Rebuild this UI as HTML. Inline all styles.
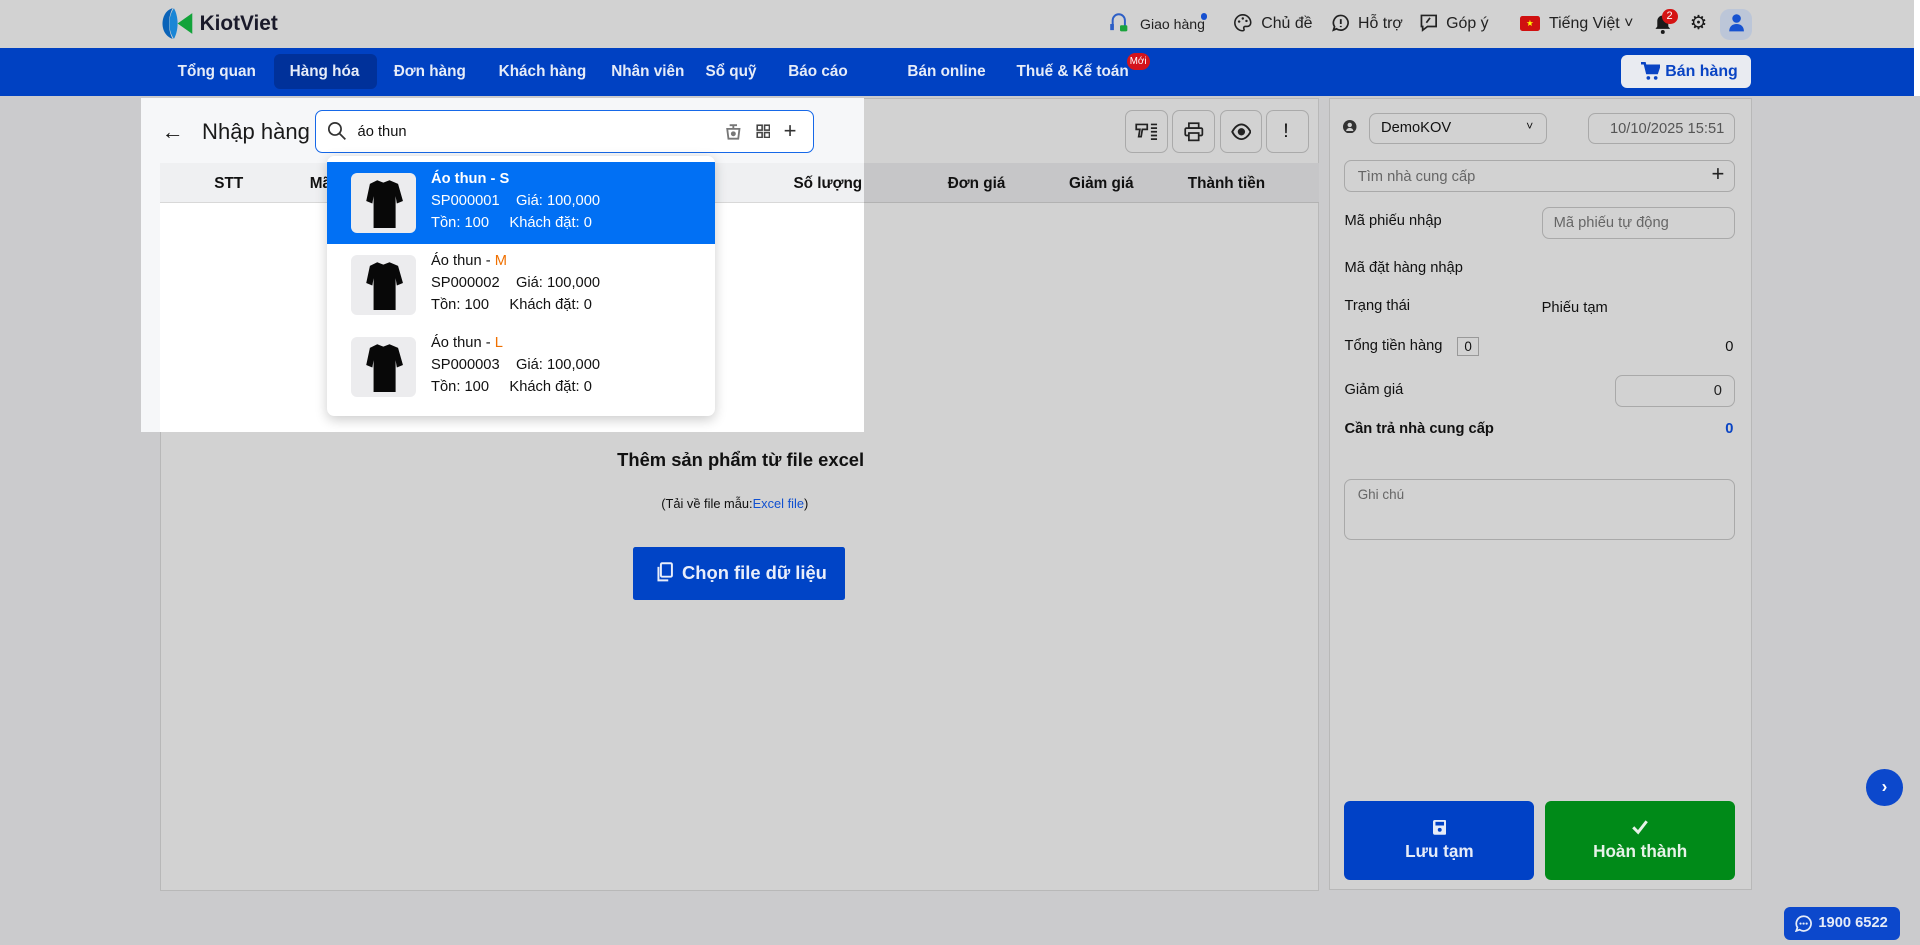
<!DOCTYPE html>
<html><head><meta charset="utf-8">
<style>
html{zoom:1.22449}
*{box-sizing:border-box;margin:0;padding:0}
body{width:1568px;height:772px;overflow:hidden;background:#cbcbcd;font-family:"Liberation Sans",sans-serif;color:#111;position:relative;font-size:13px}
.a{position:absolute}
.top{left:0;top:0;width:1568px;height:39px;background:#d2d2d2}
.nav{left:0;top:39px;width:1563px;height:39px;background:#0041c2}
.nav span{position:absolute;top:0;line-height:39px;color:#e6ecf8;font-size:12.5px;font-weight:bold;transform:translateX(-50%)}
.tb{font-size:13px;color:#222}
.panel{background:#d2d2d2;border:1px solid #b8b8b8}
.inp{border:1px solid #a9a9a9;border-radius:6px;background:#d2d2d2;color:#666}
.ico{border:1px solid #aaa;border-radius:6px;width:35px;height:35px;background:#d2d2d2}
.item{left:0;width:317px;height:67px}
.thumb{position:absolute;left:20px;top:9px;width:53px;height:49px;border-radius:5px;background:#ececee}
.thumb svg{position:absolute;left:11px;top:5px}
.itx{position:absolute;left:85px;font-size:12px;line-height:18px;top:6px}
</style></head><body>
<div class="a top"></div>
<!-- logo -->
<svg class="a" style="left:129px;top:6px" width="32" height="27" viewBox="0 0 32 27"><path d="M12 1 C2 3 0 22 12 26 C8 19 8 8 12 1Z" fill="#0a63b8"/><path d="M13 1 C8 8 8 19 13 26 C17 19 17 8 13 1Z" fill="#1a86d6"/><path d="M28 5 L16 13.5 L28 22 Z" fill="#12a33a"/></svg>
<div class="a" style="left:163px;top:10px;font-size:17px;font-weight:bold;color:#1a1a2a">KiotViet</div>
<!-- top right -->
<svg class="a" style="left:906px;top:11px" width="16" height="16" viewBox="0 0 16 16"><path d="M3 12V6a5 5 0 0 1 10 0v6" fill="none" stroke="#2d5fc6" stroke-width="1.6"/><rect x="1" y="9" width="3" height="5" fill="#2d5fc6"/><rect x="9" y="10" width="6" height="5" rx="1" fill="#1aa33c"/></svg>
<div class="a tb" style="left:931px;top:13px;font-size:11.5px">Giao hàng</div>
<div class="a" style="left:981px;top:11px;width:5px;height:5px;border-radius:50%;background:#1650d0"></div>
<svg class="a" style="left:1007px;top:11px" width="16" height="16" viewBox="0 0 16 16"><path d="M8 1.5a6.5 6.5 0 1 0 0 13c1 0 1.3-.8.9-1.6-.5-.9.1-1.9 1.1-1.9h1.5A3 3 0 0 0 14.5 8 6.5 6.5 0 0 0 8 1.5z" fill="none" stroke="#222" stroke-width="1.3"/><circle cx="5" cy="7" r="1" fill="#222"/><circle cx="8" cy="4.5" r="1" fill="#222"/><circle cx="11" cy="6.5" r="1" fill="#222"/></svg>
<div class="a tb" style="left:1030px;top:12px">Chủ đề</div>
<svg class="a" style="left:1087px;top:11px" width="16" height="16" viewBox="0 0 16 16"><path d="M8 2a6 6 0 1 1-3.5 10.9L2 14l.9-2.8A6 6 0 0 1 8 2z" fill="none" stroke="#222" stroke-width="1.4"/><path d="M8 5v4M8 10.5v1" stroke="#222" stroke-width="1.5"/></svg>
<div class="a tb" style="left:1109px;top:12px">Hỗ trợ</div>
<svg class="a" style="left:1159px;top:11px" width="16" height="16" viewBox="0 0 16 16"><path d="M2 2h12v9H7l-4 3v-3H2z" fill="none" stroke="#222" stroke-width="1.4"/><path d="M9 4l-3 4" stroke="#222" stroke-width="1.4"/></svg>
<div class="a tb" style="left:1181px;top:12px">Góp ý</div>
<div class="a" style="left:1241px;top:13px;width:17px;height:12px;background:#d01010;border-radius:2px;color:#ff0;font-size:7px;text-align:center;line-height:12px">★</div>
<div class="a tb" style="left:1265px;top:12px">Tiếng Việt ˅</div>
<svg class="a" style="left:1350px;top:11px" width="16" height="18" viewBox="0 0 16 18"><path d="M8 2a4.5 4.5 0 0 0-4.5 4.5V11L2 13h12l-1.5-2V6.5A4.5 4.5 0 0 0 8 2z" fill="#1a1a1a"/><circle cx="8" cy="15.5" r="1.6" fill="#1a1a1a"/></svg>
<div class="a" style="left:1357px;top:7px;width:13px;height:13px;border-radius:50%;background:#d41414;color:#fff;font-size:9px;text-align:center;line-height:13px">2</div>
<div class="a" style="left:1380px;top:9px;font-size:16px;color:#1a1a1a">⚙</div>
<div class="a" style="left:1405px;top:7px;width:26px;height:26px;border-radius:8px;background:#bcc6d8"></div>
<svg class="a" style="left:1411px;top:11px" width="14" height="16" viewBox="0 0 14 16"><circle cx="7" cy="4.5" r="3.5" fill="#1652d0"/><path d="M1 15c0-4 2.5-6 6-6s6 2 6 6z" fill="#1652d0"/></svg>

<div class="a nav">
<div class="a" style="left:224px;top:5px;width:84px;height:29px;border-radius:5px;background:#00319a"></div>
<span style="left:177px">Tổng quan</span><span style="left:265px">Hàng hóa</span><span style="left:351px">Đơn hàng</span><span style="left:443px">Khách hàng</span><span style="left:529px">Nhân viên</span><span style="left:597px">Sổ quỹ</span><span style="left:668px">Báo cáo</span><span style="left:773px">Bán online</span><span style="left:876px">Thuế &amp; Kế toán</span>
<div class="a" style="left:920px;top:4px;width:19px;height:14px;border-radius:7px;background:#d4141c;color:#fff;font-size:8px;text-align:center;line-height:14px">Mới</div>
<div class="a" style="left:1324px;top:6px;width:106px;height:27px;border-radius:5px;background:#e9ebf1;color:#0a44c4;font-weight:bold;font-size:13px;line-height:27px;padding-left:36px">Bán hàng</div>
<svg class="a" style="left:1340px;top:12px" width="16" height="15" viewBox="0 0 16 15"><path d="M0 1h3l2 8h8l2-6H4" fill="none" stroke="#0a44c4" stroke-width="2"/><circle cx="6" cy="13" r="1.5" fill="#0a44c4"/><circle cx="12" cy="13" r="1.5" fill="#0a44c4"/><path d="M4 3h11l-2 6H5z" fill="#0a44c4"/></svg>
</div>
<div class="a" style="left:1563px;top:0;width:5px;height:78px;background:#fff"></div>

<!-- left panel -->
<div class="a panel" style="left:131px;top:80px;width:946px;height:648px"></div>
<div class="a" style="left:131px;top:133px;width:946px;height:33px;background:#c6c6c8;border-bottom:1px solid #b2b2b2"></div>
<div class="a" style="left:774px;top:143px;font-weight:bold;font-size:12.5px">Đơn giá</div>
<div class="a" style="left:873px;top:143px;font-weight:bold;font-size:12.5px">Giảm giá</div>
<div class="a" style="left:970px;top:143px;font-weight:bold;font-size:12.5px">Thành tiền</div>
<div class="a ico" style="left:919px;top:90px"></div><div class="a ico" style="left:957px;top:90px"></div><div class="a ico" style="left:996px;top:90px"></div><div class="a ico" style="left:1034px;top:90px"></div>
<svg class="a" style="left:927px;top:100px" width="20" height="16" viewBox="0 0 20 16"><path d="M1 2h9v4H6l-1 6H3l1-6H1z" fill="none" stroke="#222" stroke-width="1.4"/><path d="M13 2h5M13 5h5M13 8h5M13 11h5M13 14h5" stroke="#222" stroke-width="1.4"/></svg>
<svg class="a" style="left:967px;top:100px" width="16" height="16" viewBox="0 0 16 16"><rect x="4" y="1" width="8" height="4" fill="none" stroke="#222" stroke-width="1.4"/><rect x="1" y="5" width="14" height="6" rx="1" fill="none" stroke="#222" stroke-width="1.4"/><rect x="4" y="9" width="8" height="6" fill="#d2d2d2" stroke="#222" stroke-width="1.4"/></svg>
<svg class="a" style="left:1005px;top:100px" width="17" height="16" viewBox="0 0 17 16"><path d="M1 8c2-4 5-6 7.5-6s5.5 2 7.5 6c-2 4-5 6-7.5 6S3 12 1 8z" fill="none" stroke="#222" stroke-width="1.5"/><circle cx="8.5" cy="8" r="3" fill="#222"/></svg>
<div class="a" style="left:1048px;top:98px;font-size:16px">!</div>
<div class="a" style="left:504px;top:367px;font-weight:bold;font-size:15px">Thêm sản phẩm từ file excel</div>
<div class="a" style="left:540px;top:405px;font-size:10.5px">(Tải về file mẫu:<span style="color:#1050d0">Excel file</span>)</div>
<div class="a" style="left:517px;top:447px;width:173px;height:43px;background:#0044c6;border-radius:2px;color:#e9eefa;font-weight:bold;font-size:15px;line-height:43px;padding-left:40px">Chọn file dữ liệu</div>
<svg class="a" style="left:536px;top:459px" width="14" height="17" viewBox="0 0 14 17"><rect x="4" y="1" width="9" height="11" rx="1" fill="none" stroke="#e9eefa" stroke-width="1.6"/><path d="M2 4v11h8" fill="none" stroke="#e9eefa" stroke-width="1.6"/></svg>

<!-- spotlight region -->
<div class="a" style="left:115px;top:80px;width:591px;height:273px;background:#f6f7f9"></div>
<div class="a" style="left:131px;top:133px;width:575px;height:33px;background:#eff0f2;border-bottom:1px solid #d8d8d8"></div>
<div class="a" style="left:131px;top:166px;width:575px;height:187px;background:#fff"></div>
<div class="a" style="left:175px;top:143px;font-weight:bold;font-size:12.5px">STT</div>
<div class="a" style="left:253px;top:143px;font-weight:bold;font-size:12.5px">Mã</div>
<div class="a" style="left:648px;top:143px;font-weight:bold;font-size:12.5px">Số lượng</div>
<div class="a" style="left:132px;top:97px;font-size:18px">←</div>
<div class="a" style="left:165px;top:97px;font-size:18px;font-weight:500;color:#1a1a1a">Nhập hàng</div>
<div class="a" style="left:257px;top:90px;width:408px;height:35px;border:1px solid #1668e8;border-radius:6px;background:#fff"></div>
<svg class="a" style="left:267px;top:99px" width="16" height="16" viewBox="0 0 16 16"><circle cx="6.5" cy="6.5" r="5" fill="none" stroke="#333" stroke-width="1.4"/><path d="M10 10l5 5" stroke="#333" stroke-width="1.4"/></svg>
<div class="a" style="left:292px;top:101px;font-size:12px">áo thun</div>
<svg class="a" style="left:593px;top:101px" width="12" height="13" viewBox="0 0 12 13"><path d="M3 1h6M6 1v3M1 4h10l-1 8H2z" fill="none" stroke="#777" stroke-width="1.5"/><circle cx="6" cy="8" r="2" fill="#777"/></svg>
<svg class="a" style="left:617px;top:101px" width="12" height="12" viewBox="0 0 12 12"><g fill="none" stroke="#444" stroke-width="1.3"><rect x="1" y="1" width="4" height="4"/><rect x="7" y="1" width="4" height="4"/><rect x="1" y="7" width="4" height="4"/><rect x="7" y="7" width="4" height="4"/></g></svg>
<div class="a" style="left:640px;top:96px;font-size:18px;color:#333">+</div>

<!-- dropdown -->
<div class="a" style="left:267px;top:127px;width:317px;height:213px;background:#fff;border-radius:6px;box-shadow:0 3px 10px rgba(0,0,0,.2);overflow:hidden">
<div class="a item" style="top:5px;background:#0170f4;color:#fff"><div class="thumb"><svg width="31" height="40" viewBox="0 0 31 40"><path d="M10 1l5 2 5-2 7 3 4 14-5 2-1-6v26H7V14l-1 6-5-2L4 4z" fill="#080808"/></svg></div><div class="itx" style="top:5px"><b>Áo thun - S</b><br>SP000001&nbsp;&nbsp;&nbsp; Giá: 100,000<br>Tồn: 100&nbsp;&nbsp;&nbsp;&nbsp; Khách đặt: 0</div></div>
<div class="a item" style="top:72px"><div class="thumb"><svg width="31" height="40" viewBox="0 0 31 40"><path d="M10 1l5 2 5-2 7 3 4 14-5 2-1-6v26H7V14l-1 6-5-2L4 4z" fill="#080808"/></svg></div><div class="itx" style="top:5px"><b style="font-weight:500">Áo thun - <span style="color:#f07000">M</span></b><br>SP000002&nbsp;&nbsp;&nbsp; Giá: 100,000<br>Tồn: 100&nbsp;&nbsp;&nbsp;&nbsp; Khách đặt: 0</div></div>
<div class="a item" style="top:139px"><div class="thumb"><svg width="31" height="40" viewBox="0 0 31 40"><path d="M10 1l5 2 5-2 7 3 4 14-5 2-1-6v26H7V14l-1 6-5-2L4 4z" fill="#080808"/></svg></div><div class="itx" style="top:5px"><b style="font-weight:500">Áo thun - <span style="color:#f07000">L</span></b><br>SP000003&nbsp;&nbsp;&nbsp; Giá: 100,000<br>Tồn: 100&nbsp;&nbsp;&nbsp;&nbsp; Khách đặt: 0</div></div>
</div>

<!-- right panel -->
<div class="a panel" style="left:1085px;top:80px;width:346px;height:647px"></div>
<svg class="a" style="left:1097px;top:98px" width="11" height="11" viewBox="0 0 11 11"><circle cx="5.5" cy="5.5" r="5.5" fill="#333"/><circle cx="5.5" cy="4" r="1.8" fill="#d2d2d2"/><path d="M2.5 9c.5-2 1.5-2.5 3-2.5s2.5.5 3 2.5z" fill="#d2d2d2"/></svg>
<div class="a inp" style="left:1118px;top:92px;width:145px;height:26px;color:#111;padding:5px 9px;font-size:12px">DemoKOV<span style="position:absolute;right:10px;top:4px;font-size:10px">˅</span></div>
<div class="a inp" style="left:1297px;top:92px;width:120px;height:26px;padding:6px 0 0 17px;font-size:12px;color:#555">10/10/2025 15:51</div>
<div class="a inp" style="left:1098px;top:131px;width:319px;height:26px;padding:6px 10px;font-size:12px">Tìm nhà cung cấp<span style="position:absolute;right:8px;top:0;font-size:18px;color:#222">+</span></div>
<div class="a" style="left:1098px;top:174px;font-size:12px">Mã phiếu nhập</div>
<div class="a inp" style="left:1259px;top:169px;width:158px;height:26px;padding:6px 9px;font-size:12px">Mã phiếu tự động</div>
<div class="a" style="left:1098px;top:212px;font-size:12px">Mã đặt hàng nhập</div>
<div class="a" style="left:1098px;top:243px;font-size:12px">Trạng thái</div>
<div class="a" style="left:1259px;top:245px;font-size:12px">Phiếu tạm</div>
<div class="a" style="left:1098px;top:276px;font-size:12px">Tổng tiền hàng</div>
<div class="a" style="left:1190px;top:275px;width:18px;height:16px;border:1px solid #999;font-size:11px;text-align:center;line-height:14px">0</div>
<div class="a" style="left:1409px;top:277px;font-size:12px">0</div>
<div class="a" style="left:1098px;top:312px;font-size:12px">Giảm giá</div>
<div class="a inp" style="left:1319px;top:306px;width:98px;height:26px;text-align:right;padding:6px 10px;font-size:12px;color:#222">0</div>
<div class="a" style="left:1098px;top:344px;font-size:12px;font-weight:bold">Cần trả nhà cung cấp</div>
<div class="a" style="left:1409px;top:344px;font-size:12px;font-weight:bold;color:#0a44c4">0</div>
<div class="a inp" style="left:1098px;top:391px;width:319px;height:50px;padding:6px 10px;font-size:11px">Ghi chú</div>
<div class="a" style="left:1098px;top:654px;width:155px;height:65px;background:#0041c6;border-radius:5px;color:#e6ecf8;font-weight:bold;font-size:14px;text-align:center;padding-top:33px">Lưu tạm</div>
<svg class="a" style="left:1170px;top:670px" width="11" height="12" viewBox="0 0 11 12"><rect x="0" y="0" width="11" height="12" rx="1.5" fill="#e6ecf8"/><rect x="2" y="1.5" width="7" height="3" fill="#0041c6"/><circle cx="5.5" cy="8" r="1.6" fill="#0041c6"/></svg>
<div class="a" style="left:1262px;top:654px;width:155px;height:65px;background:#008a18;border-radius:5px;color:#e6f2e8;font-weight:bold;font-size:14px;text-align:center;padding-top:33px">Hoàn thành</div>
<svg class="a" style="left:1333px;top:670px" width="13" height="12" viewBox="0 0 13 12"><path d="M1 6l4 4 7-9" fill="none" stroke="#e6f2e8" stroke-width="2.4"/></svg>

<div class="a" style="left:1524px;top:628px;width:30px;height:30px;border-radius:50%;background:#0c48cc;color:#fff;text-align:center;line-height:29px;font-weight:bold;font-size:14px">›</div>
<div class="a" style="left:1457px;top:741px;width:95px;height:27px;border-radius:5px;background:#0c48cc;color:#e6ecf8;font-weight:bold;font-size:12px;line-height:27px;padding-left:28px">1900 6522</div>
<svg class="a" style="left:1466px;top:747px" width="14" height="14" viewBox="0 0 14 14"><path d="M7 1a6 6 0 1 1-3.2 11L1 13l1-2.8A6 6 0 0 1 7 1z" fill="none" stroke="#e6ecf8" stroke-width="1.4"/><circle cx="4.5" cy="7" r=".9" fill="#e6ecf8"/><circle cx="7" cy="7" r=".9" fill="#e6ecf8"/><circle cx="9.5" cy="7" r=".9" fill="#e6ecf8"/></svg>
</body></html>
